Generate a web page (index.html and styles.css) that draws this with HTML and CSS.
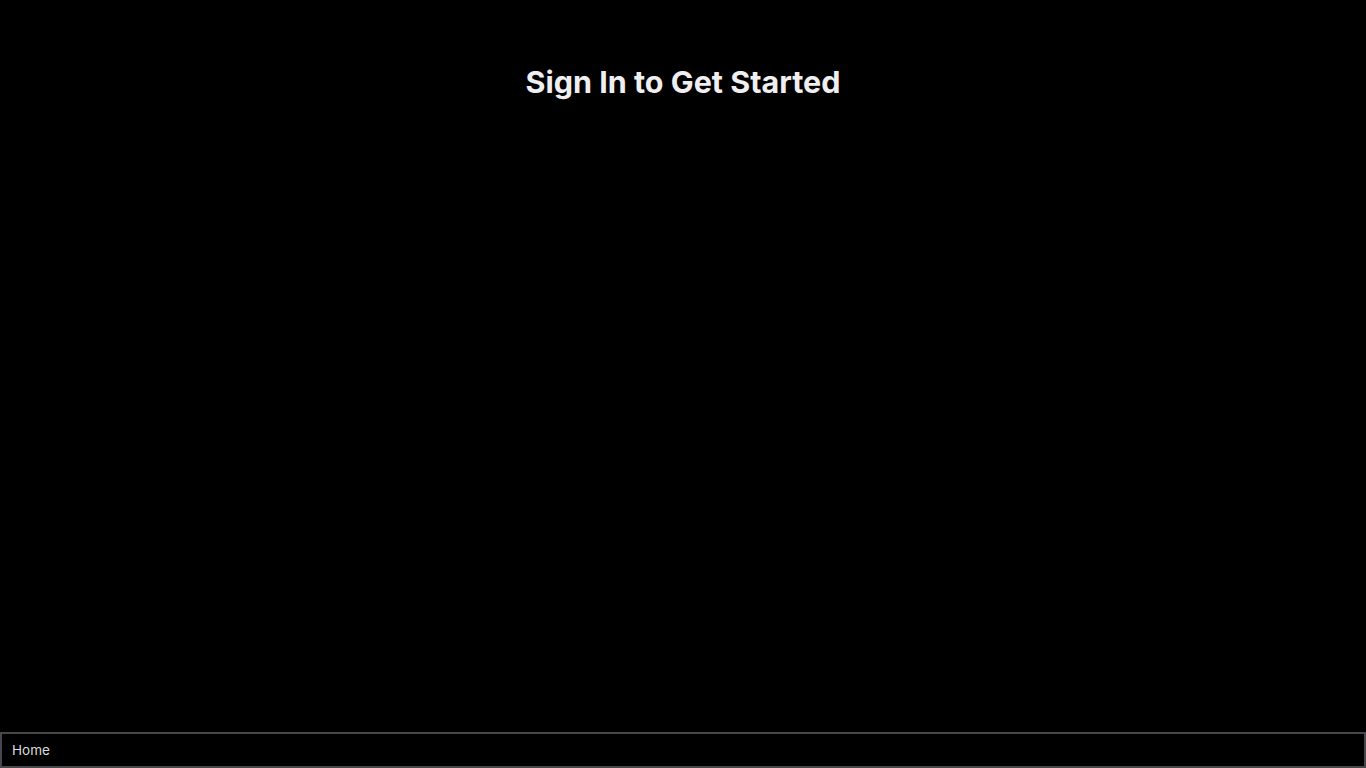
FILE: index.html
```html
<!DOCTYPE html>
<html lang="en">
<head>
  <meta charset="UTF-8">
  <meta name="viewport" content="width=device-width, initial-scale=1.0">
  <title>Sign In</title>
  <link rel="stylesheet" href="styles.css">
</head>
<body>
  <main class="content">
    <h1 class="title">Sign In to Get Started</h1>
  </main>
  <nav class="tabbar">
    <span class="tab">Home</span>
  </nav>
</body>
</html>
```

FILE: styles.css
```css
html, body {
  height: 100%;
}

body {
  display: flex;
  flex-direction: column;
  margin: 0;
  font-family: 'Inter', 'Noto Sans', sans-serif;
  background-color: #000;
  color: #eee;
}

.content {
  flex: 1;
  display: flex;
  flex-direction: column;
  align-items: center;
}

.title {
  margin: 64px 0 0;
  font-size: 30.5px;
  font-weight: 700;
  line-height: 36px;
  color: #efeff1;
}

.tabbar {
  display: flex;
  align-items: center;
  height: 32px;
  padding: 0 10px;
  border: 2px solid #48484c;
}

.tab {
  font-size: 13.5px;
  color: #ddd;
}
```
